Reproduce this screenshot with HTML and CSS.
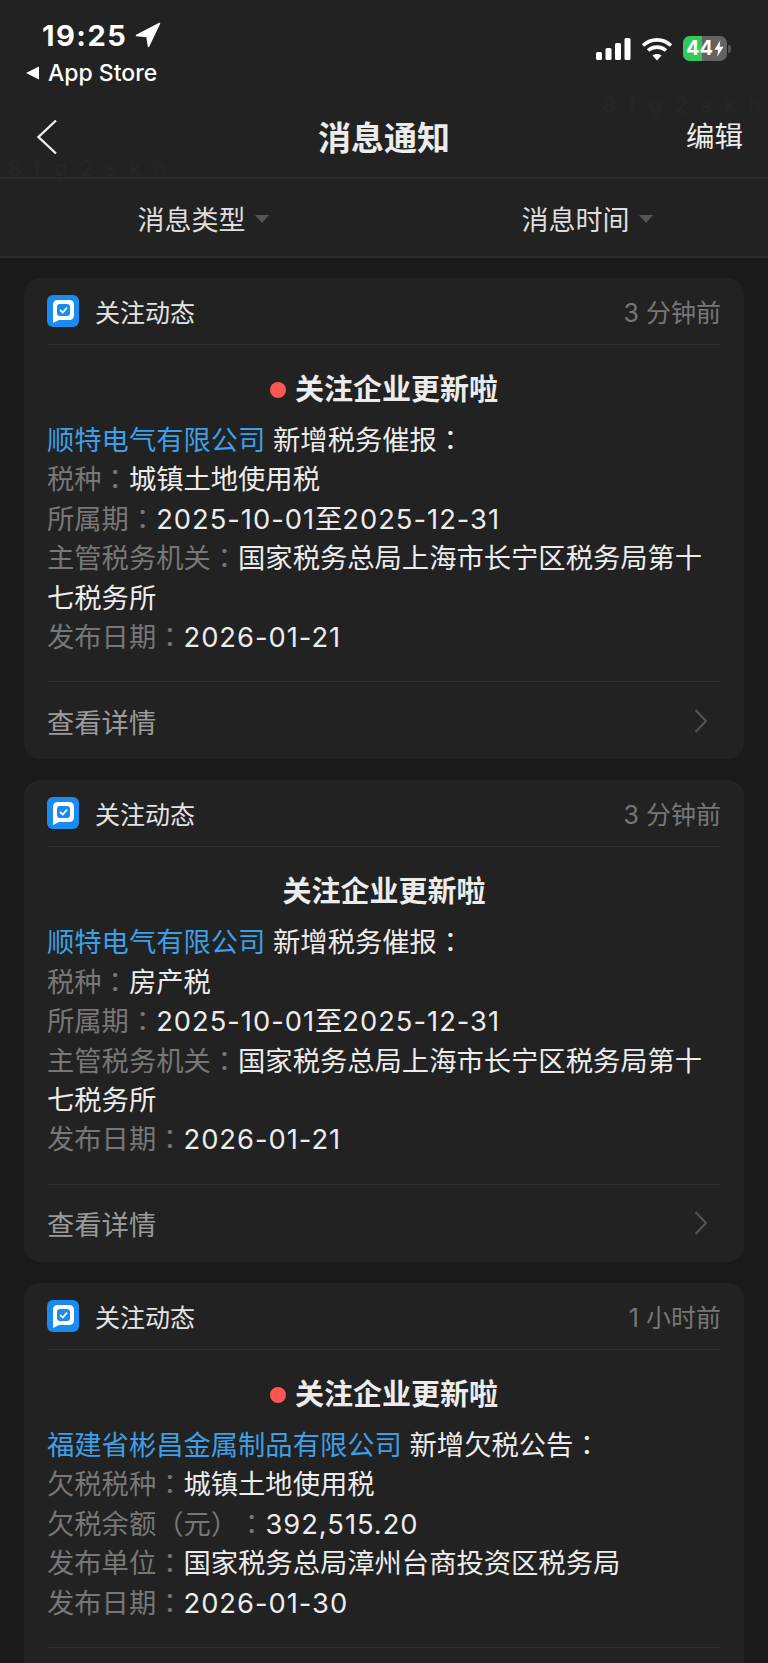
FILE: index.html
```html
<!DOCTYPE html>
<html lang="zh-CN">
<head>
    <meta charset="UTF-8">
    <meta name="viewport" content="width=device-width, initial-scale=1.0">
    <title>消息通知</title>
    <link rel="stylesheet" href="styles.css">
</head>
<body>
    <header class="top">
        <div class="status">
            <div class="status-left">
                <div class="clock">
                    <span>19:25</span>
                    <svg class="arrow" width="26" height="26" viewBox="0 0 26 26"><path d="M24.5 1.5 L1.5 13.5 L12 14.5 L13.5 24.5 Z" fill="#fff" stroke="#fff" stroke-width="1.5" stroke-linejoin="round"/></svg>
                </div>
                <div class="back-app">
                    <svg width="15" height="14" viewBox="0 0 15 14"><path d="M1 7 L14 0.5 V13.5 Z" fill="#fff"/></svg>
                    <span>App Store</span>
                </div>
            </div>
            <div class="status-right">
                <svg width="35" height="22" viewBox="0 0 35 22">
                    <rect x="0" y="14" width="6" height="8" rx="1.5" fill="#fff"/>
                    <rect x="9.5" y="10" width="6" height="12" rx="1.5" fill="#fff"/>
                    <rect x="19" y="5" width="6" height="17" rx="1.5" fill="#fff"/>
                    <rect x="28.5" y="0" width="6" height="22" rx="1.5" fill="#fff"/>
                </svg>
                <svg width="32" height="24" viewBox="0 0 32 24" fill="none" stroke="#fff" stroke-width="3.6">
                    <path d="M2 8.5 C10 1 22 1 30 8.5"/>
                    <path d="M7 13.5 C12 9 20 9 25 13.5"/>
                    <path d="M16 23.5 L11.5 18.5 C14 16.5 18 16.5 20.5 18.5 Z" fill="#fff" stroke="none"/>
                </svg>
                <div class="battery">
                    <div class="battery-body">
                        <span class="battery-fill"></span>
                        <span class="battery-num">44</span>
                        <svg width="10" height="17" viewBox="0 0 11 18"><path d="M7 0 L0.5 10.5 H4.5 L3.5 18 L10.5 7 H6.2 Z" fill="#fff"/></svg>
                    </div>
                    <span class="battery-tip"></span>
                </div>
            </div>
        </div>
        <nav class="nav">
            <svg class="nav-back" width="22" height="36" viewBox="0 0 22 36" fill="none"><path d="M20 1.5 L2.5 18 L20 34.5" stroke="#eee" stroke-width="2.4"/></svg>
            <h1>消息通知</h1>
            <a class="nav-edit">编辑</a>
            <span class="mark mark-a">8 f g 2 s k h</span>
            <span class="mark mark-b">8 f g 2 s k h</span>
        </nav>
        <div class="filters">
            <div class="filter">消息类型<i class="caret"></i></div>
            <div class="filter">消息时间<i class="caret"></i></div>
        </div>
    </header>

    <main class="list">
        <section class="card">
            <div class="card-head">
                <svg class="app-icon" viewBox="0 0 32 32"><use href="#msg-icon"/></svg>
                <span class="card-type">关注动态</span>
                <span class="card-time">3 分钟前</span>
            </div>
            <div class="card-body">
                <h2><i class="dot"></i>关注企业更新啦</h2>
                <p><a class="company">顺特电气有限公司</a> 新增税务催报<i class="colon" lang="zh-Hant">：</i></p>
                <p><span class="key">税种<i class="colon" lang="zh-Hant">：</i></span>城镇土地使用税</p>
                <p><span class="key">所属期<i class="colon" lang="zh-Hant">：</i></span><span class="num">2025-10-01</span>至<span class="num">2025-12-31</span></p>
                <p><span class="key">主管税务机关<i class="colon" lang="zh-Hant">：</i></span>国家税务总局上海市长宁区税务局第十七税务所</p>
                <p><span class="key">发布日期<i class="colon" lang="zh-Hant">：</i></span><span class="num">2026-01-21</span></p>
            </div>
            <div class="card-foot">
                <span>查看详情</span>
                <svg width="14" height="24" viewBox="0 0 14 24" fill="none"><path d="M1.5 1 L12 12 L1.5 23" stroke="#555" stroke-width="2"/></svg>
            </div>
        </section>

        <section class="card">
            <div class="card-head">
                <svg class="app-icon" viewBox="0 0 32 32"><use href="#msg-icon"/></svg>
                <span class="card-type">关注动态</span>
                <span class="card-time">3 分钟前</span>
            </div>
            <div class="card-body">
                <h2>关注企业更新啦</h2>
                <p><a class="company">顺特电气有限公司</a> 新增税务催报<i class="colon" lang="zh-Hant">：</i></p>
                <p><span class="key">税种<i class="colon" lang="zh-Hant">：</i></span>房产税</p>
                <p><span class="key">所属期<i class="colon" lang="zh-Hant">：</i></span><span class="num">2025-10-01</span>至<span class="num">2025-12-31</span></p>
                <p><span class="key">主管税务机关<i class="colon" lang="zh-Hant">：</i></span>国家税务总局上海市长宁区税务局第十七税务所</p>
                <p><span class="key">发布日期<i class="colon" lang="zh-Hant">：</i></span><span class="num">2026-01-21</span></p>
            </div>
            <div class="card-foot">
                <span>查看详情</span>
                <svg width="14" height="24" viewBox="0 0 14 24" fill="none"><path d="M1.5 1 L12 12 L1.5 23" stroke="#555" stroke-width="2"/></svg>
            </div>
        </section>

        <section class="card">
            <div class="card-head">
                <svg class="app-icon" viewBox="0 0 32 32"><use href="#msg-icon"/></svg>
                <span class="card-type">关注动态</span>
                <span class="card-time">1 小时前</span>
            </div>
            <div class="card-body">
                <h2><i class="dot"></i>关注企业更新啦</h2>
                <p><a class="company">福建省彬昌金属制品有限公司</a> 新增欠税公告<i class="colon" lang="zh-Hant">：</i></p>
                <p><span class="key">欠税税种<i class="colon" lang="zh-Hant">：</i></span>城镇土地使用税</p>
                <p><span class="key">欠税余额（元）<i class="colon" lang="zh-Hant">：</i></span><span class="num">392,515.20</span></p>
                <p><span class="key">发布单位<i class="colon" lang="zh-Hant">：</i></span>国家税务总局漳州台商投资区税务局</p>
                <p><span class="key">发布日期<i class="colon" lang="zh-Hant">：</i></span><span class="num">2026-01-30</span></p>
            </div>
            <div class="card-foot"></div>
        </section>
    </main>

    <!-- shared app icon, blue tile with a chat bubble and tick -->
    <svg class="defs" width="0" height="0">
        <symbol id="msg-icon" viewBox="0 0 32 32">
            <rect width="32" height="32" rx="6" fill="#1a8cf0"/>
            <path d="M11 5 H22 Q27 5 27 10 V20 Q27 25 22 25 H12 L6 28 V10 Q6 5 11 5 Z" fill="#fff"/>
            <rect x="10" y="9" width="13" height="12" rx="3" fill="#1a8cf0"/>
            <path d="M13 15 L15.8 17.5 L20 12.6" fill="none" stroke="#fff" stroke-width="1.8"/>
        </symbol>
    </svg>
</body>
</html>
```

FILE: styles.css
```css
* {
    box-sizing: border-box;
}

html, body {
    height: 100%;
}

body {
    margin: 0;
    overflow: hidden;
    background-color: #1a1a1a;
    color: #ececec;
    font-family: "Inter", "Noto Sans CJK SC", sans-serif;
    text-spacing-trim: space-all;
}

.defs {
    position: absolute;
}

.top {
    background-color: #222;
}

/* status bar */
.status {
    height: 96px;
    display: flex;
    justify-content: space-between;
    padding: 19px 37px 0 25px;
    color: #fff;
}

.clock {
    display: flex;
    align-items: center;
    gap: 8px;
    height: 32px;
    padding-left: 17px;
    font-size: 29px;
    font-weight: 700;
    letter-spacing: 1.5px;
}

.back-app {
    display: flex;
    align-items: center;
    gap: 8px;
    margin-top: 7px;
    font-size: 23px;
    font-weight: 500;
    line-height: 30px;
}

.status-right {
    display: flex;
    align-items: center;
    gap: 10px;
    height: 46px;
    padding-top: 13px;
}

.battery {
    display: flex;
    align-items: center;
    gap: 1px;
}

.battery-body {
    position: relative;
    width: 44px;
    height: 25px;
    display: flex;
    align-items: center;
    gap: 1px;
    padding-left: 3px;
    border-radius: 7px;
    overflow: hidden;
    background-color: #636363;
}

.battery-fill {
    position: absolute;
    left: 0;
    top: 0;
    bottom: 0;
    width: 19px;
    background-color: #34c759;
}

.battery-num {
    position: relative;
    font-size: 20px;
    font-weight: 700;
    line-height: 25px;
}

.battery-body svg {
    position: relative;
}

.battery-tip {
    width: 3px;
    height: 8px;
    border-radius: 0 3px 3px 0;
    background-color: #555;
}

/* title row */
.nav {
    position: relative;
    height: 83px;
    display: flex;
    align-items: center;
    justify-content: center;
    border-bottom: 2px solid #2c2c2c;
}

.nav h1 {
    margin: 0 0 2px;
    font-size: 33px;
    font-weight: 700;
}

.nav-back {
    position: absolute;
    left: 36px;
    top: 23px;
}

.nav-edit {
    position: absolute;
    right: 25px;
    top: 21px;
    font-size: 28.5px;
    line-height: 40px;
}

.mark {
    position: absolute;
    color: #262626;
    font-size: 22px;
    letter-spacing: 3px;
}

.mark-a {
    right: 4px;
    top: -4px;
}

.mark-b {
    left: 8px;
    top: 59px;
}

/* filter row */
.filters {
    height: 79px;
    display: flex;
    border-bottom: 2px solid #2c2c2c;
}

.filter {
    flex: 1;
    display: flex;
    align-items: center;
    justify-content: center;
    gap: 9px;
    padding: 2px 0 0 22px;
    font-size: 27px;
    color: #dedede;
}

.caret {
    width: 0;
    height: 0;
    border-left: 7px solid transparent;
    border-right: 7px solid transparent;
    border-top: 8px solid #555;
}

/* message cards */
.list {
    display: flex;
    flex-direction: column;
    gap: 21px;
    padding: 20px 24px 0;
}

.card {
    border-radius: 16px;
    padding: 0 23px;
    background-color: #222;
}

.card-head {
    height: 67px;
    display: flex;
    align-items: center;
    border-bottom: 1px solid #2f2f2f;
}

.app-icon {
    width: 32px;
    height: 32px;
    margin-right: 16px;
}

.card-type {
    font-size: 25px;
    color: #e4e4e4;
}

.card-time {
    margin-left: auto;
    font-size: 25px;
    color: #777;
}

.card-body {
    padding: 25px 0 24px;
    font-size: 27.3px;
    line-height: 39.4px;
}

.card-body h2 {
    display: flex;
    align-items: center;
    justify-content: center;
    margin: 0 0 11px;
    font-size: 29px;
    font-weight: 700;
    line-height: 40px;
    text-align: center;
}

.card-body p {
    margin: 0;
}

/* full-width colon sits centred in its box; zero line height keeps the row pitch */
.colon {
    font-family: "Noto Sans CJK TC", sans-serif;
    font-style: normal;
    line-height: 0;
}

.num {
    letter-spacing: 1px;
}

.dot {
    width: 16px;
    height: 16px;
    margin-right: 9px;
    border-radius: 50%;
    background-color: #ff5555;
}

.company {
    color: #3e9fe6;
}

.key {
    color: #777;
}

.card-foot {
    height: 78px;
    display: flex;
    align-items: center;
    justify-content: space-between;
    padding-right: 13px;
    border-top: 1px solid #2f2f2f;
    font-size: 27.3px;
    color: #9a9a9a;
}
```
